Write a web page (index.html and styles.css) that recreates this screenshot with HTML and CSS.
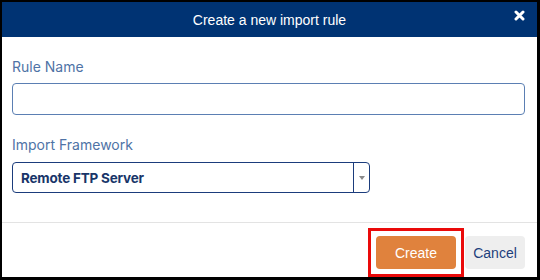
FILE: index.html
```html
<!DOCTYPE html>
<html lang="en">
<head>
    <meta charset="UTF-8">
    <meta name="viewport" content="width=device-width, initial-scale=1.0">
    <title>Create a new import rule</title>
    <link rel="stylesheet" href="styles.css">
</head>
<body>
    <div class="modal">
        <header class="modal-header">
            <h1>Create a new import rule</h1>
            <button class="close" aria-label="Close">
                <svg width="11" height="11" viewBox="0 0 11 11">
                    <path d="M2 2 L9 9 M9 2 L2 9" stroke="#fff" stroke-width="3" stroke-linecap="round"/>
                </svg>
            </button>
        </header>

        <div class="modal-body">
            <label class="field-label" for="rule-name">Rule Name</label>
            <input class="text-input" id="rule-name" type="text">

            <label class="field-label second">Import Framework</label>
            <div class="select">
                <span class="select-value">Remote FTP Server</span>
                <span class="select-arrow"><i></i></span>
            </div>
        </div>

        <footer class="modal-footer">
            <button class="btn btn-create">Create</button>
            <button class="btn btn-cancel">Cancel</button>
        </footer>
    </div>
</body>
</html>
```

FILE: styles.css
```css
body {
    margin: 0;
    padding: 0;
    background-color: #000;
    height: 280px;
    font-family: Inter, "Noto Sans", sans-serif;
}
.modal {
    margin: 2px 3px 0 2px;
    height: 275px;
    background-color: #fff;
    display: flex;
    flex-direction: column;
}
.modal-header {
    height: 35px;
    background-color: #003373;
    color: #fff;
    display: flex;
    align-items: center;
    justify-content: center;
    position: relative;
}
.modal-header h1 {
    margin: 0;
    font-family: "Liberation Sans", Arial, sans-serif;
    font-size: 14px;
    font-weight: normal;
}
.close {
    position: absolute;
    right: 12px;
    top: 8px;
    background: none;
    border: none;
    padding: 0;
    width: 11px;
    height: 11px;
    display: flex;
}
.modal-body {
    flex: 1;
    padding: 20px 12px 0 10px;
    display: flex;
    flex-direction: column;
}
.field-label {
    font-size: 14px;
    line-height: 20px;
    color: #4f73a6;
    margin-bottom: 6px;
}
.field-label.second {
    margin-top: 20px;
    margin-bottom: 7px;
}
.text-input {
    box-sizing: border-box;
    height: 32px;
    width: 100%;
    margin: 0;
    border: 1px solid #5b7fb3;
    border-radius: 4px;
    background: #fff;
}
.select {
    box-sizing: border-box;
    width: 358px;
    height: 31px;
    border: 1px solid #1b3c7c;
    border-radius: 4px;
    display: flex;
    align-items: stretch;
}
.select-value {
    flex: 1;
    display: flex;
    align-items: center;
    padding-left: 8px;
    font-size: 13.5px;
    font-weight: 700;
    letter-spacing: -0.2px;
    color: #183569;
    border-right: 1px solid #1b3c7c;
}
.select-arrow {
    width: 15px;
    display: flex;
    align-items: center;
    justify-content: center;
}
.select-arrow i {
    width: 0;
    height: 0;
    border-left: 3px solid transparent;
    border-right: 3px solid transparent;
    border-top: 4px solid #8a8a8a;
}
.modal-footer {
    height: 55px;
    border-top: 1px solid #e3e3e3;
    display: flex;
    justify-content: flex-end;
    align-items: flex-start;
    gap: 9px;
    padding: 13px 12px 0 0;
    box-sizing: border-box;
}
.btn {
    height: 33px;
    border: none;
    border-radius: 4px;
    font-family: "Liberation Sans", Arial, sans-serif;
    font-size: 14px;
    padding: 0;
}
.btn-create {
    width: 80px;
    background-color: #e0823d;
    color: #fff;
    position: relative;
}
/* red highlight box drawn over the button */
.btn-create::after {
    content: "";
    position: absolute;
    left: -8px;
    right: -8px;
    top: -8px;
    bottom: -8px;
    border: 3px solid #ea0a0a;
}
.btn-cancel {
    width: 60px;
    background-color: #eeeeee;
    color: #1d3f7c;
}
```
